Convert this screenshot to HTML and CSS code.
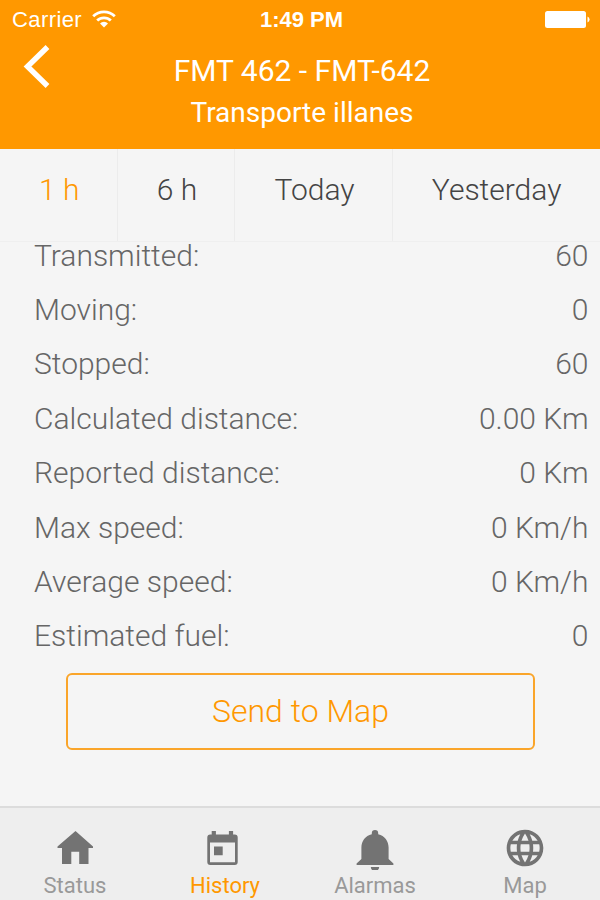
FILE: index.html
```html
<!DOCTYPE html>
<html lang="en">
<head>
    <meta charset="UTF-8">
    <meta name="viewport" content="width=device-width, initial-scale=1.0">
    <title>History</title>
    <link rel="stylesheet" href="styles.css">
</head>
<body>
    <header class="header">
        <div class="status-bar">
            <div class="carrier">
                <span class="carrier-name">Carrier</span>
                <svg class="wifi" viewBox="0 0 24 18" fill="none" stroke="#fff" stroke-width="2.8">
                    <path d="M1.2 6.200a15.400 15.400 0 0 1 21.600 0"/>
                    <path d="M5.200 10.600a9.700 9.700 0 0 1 13.600 0"/>
                    <path d="M12 17.400l-4-4a5.700 5.700 0 0 1 8 0z" fill="#fff" stroke="none"/>
                </svg>
            </div>
            <span class="time">1:49 PM</span>
            <svg class="battery" viewBox="0 0 46 18" fill="#fff">
                <rect x="0" y="0" width="41" height="17" rx="2.5"/>
                <path d="M42.500 5.500a3.200 3.200 0 0 1 0 6z"/>
            </svg>
        </div>
        <div class="title-bar">
            <a class="back" href="#" aria-label="Back">
                <svg viewBox="0 0 28 44" fill="none" stroke="#fff" stroke-width="5.4">
                    <path d="M24.500 2L4.500 21.500 24.500 41"/>
                </svg>
            </a>
            <div class="titles">
                <h1>FMT 462 - FMT-642</h1>
                <h2>Transporte illanes</h2>
            </div>
        </div>
    </header>

    <nav class="periods">
        <a class="active" href="#">1 h</a>
        <a href="#">6 h</a>
        <a href="#">Today</a>
        <a href="#">Yesterday</a>
    </nav>

    <main class="content">
        <dl class="stats">
            <div class="row"><dt>Transmitted:</dt><dd>60</dd></div>
            <div class="row"><dt>Moving:</dt><dd>0</dd></div>
            <div class="row"><dt>Stopped:</dt><dd>60</dd></div>
            <div class="row"><dt>Calculated distance:</dt><dd>0.00 Km</dd></div>
            <div class="row"><dt>Reported distance:</dt><dd>0 Km</dd></div>
            <div class="row"><dt>Max speed:</dt><dd>0 Km/h</dd></div>
            <div class="row"><dt>Average speed:</dt><dd>0 Km/h</dd></div>
            <div class="row"><dt>Estimated fuel:</dt><dd>0</dd></div>
        </dl>
        <button class="send-button">Send to Map</button>
    </main>

    <footer class="tabs">
        <a href="#">
            <svg viewBox="0 0 44 44"><path d="M22.500 5L4.500 20.500V22H9v16h9.300V25.700h7.900V38h9.300V22H40v-1.500z"/></svg>
            <span>Status</span>
        </a>
        <a class="active" href="#">
            <svg viewBox="0 0 44 44"><path fill-rule="evenodd" d="M8.700 5h4.200v3.500h13V5h4.200v3.500h1.600a3 3 0 0 1 3 3V36a3 3 0 0 1-3 3H7.300a3 3 0 0 1-3-3V11.500a3 3 0 0 1 3-3h1.400zM7 16.500v19.800h25V16.500zM11 20.500h8.700v8.700H11z"/></svg>
            <span>History</span>
        </a>
        <a href="#">
            <svg viewBox="0 0 44 44"><path d="M22 4a3.200 3.200 0 0 0-3.200 3.200v1C12.300 9.800 8.400 15 8.400 21.500V33L3.600 37.500V39h36.800v-1.500L35.600 33V21.500c0-6.500-3.900-11.700-10.400-13.300v-1A3.200 3.200 0 0 0 22 4zM17.800 41h8.400a4.200 4.200 0 0 1-8.400 0z"/></svg>
            <span>Alarmas</span>
        </a>
        <a href="#">
            <svg viewBox="0 0 24 24"><path d="M11.990 2C6.470 2 2 6.480 2 12s4.470 10 9.990 10C17.520 22 22 17.520 22 12S17.520 2 11.990 2zm6.930 6h-2.950c-.32-1.250-.78-2.450-1.380-3.560 1.840.63 3.370 1.910 4.330 3.560zM12 4.040c.83 1.200 1.480 2.530 1.910 3.960h-3.820c.43-1.430 1.080-2.760 1.910-3.960zM4.260 14C4.100 13.360 4 12.690 4 12s.1-1.360.26-2h3.380c-.08.66-.14 1.320-.14 2s.06 1.340.14 2H4.260zm.82 2h2.950c.32 1.250.78 2.450 1.380 3.560-1.840-.63-3.370-1.900-4.330-3.560zm2.950-8H5.080c.96-1.660 2.490-2.930 4.330-3.560C8.810 5.550 8.350 6.750 8.030 8zM12 19.960c-.83-1.200-1.480-2.530-1.910-3.960h3.820c-.43 1.430-1.080 2.760-1.910 3.960zM14.340 14H9.660c-.09-.66-.16-1.320-.16-2s.07-1.350.16-2h4.680c.09.65.16 1.320.16 2s-.07 1.340-.16 2zm.25 5.560c.6-1.110 1.060-2.310 1.380-3.560h2.950c-.96 1.650-2.490 2.930-4.330 3.560zM16.360 14c.08-.66.14-1.320.14-2s-.06-1.340-.14-2h3.380c.16.64.26 1.310.26 2s-.1 1.360-.26 2h-3.380z"/></svg>
            <span>Map</span>
        </a>
    </footer>
</body>
</html>
```

FILE: styles.css
```css
* {
    box-sizing: border-box;
}

body {
    display: flex;
    flex-direction: column;
    height: 900px;
    margin: 0;
    overflow: hidden;
    background-color: #f5f5f5;
    font-family: Roboto, sans-serif;
    font-weight: 300;
}

a {
    color: inherit;
    text-decoration: none;
}

.header {
    height: 149px;
    background-color: #ff9800;
    color: #fff;
}

.status-bar {
    display: grid;
    grid-template-columns: 1fr auto 1fr;
    align-items: center;
    height: 40px;
    padding: 0 9px 0 12px;
    font-family: "Liberation Sans", Arial, sans-serif;
    font-size: 22px;
}

.carrier {
    display: flex;
    align-items: center;
    gap: 10px;
    font-weight: 400;
}

.carrier-name {
    letter-spacing: 0.4px;
}

.wifi {
    width: 24px;
    height: 18px;
    margin-bottom: 2px;
}

.time {
    font-weight: 700;
}

.battery {
    justify-self: end;
    width: 46px;
    height: 18px;
}

.title-bar {
    display: grid;
    grid-template-columns: 76px 1fr 72px;
}

.back {
    padding: 5px 0 0 23px;
}

.back svg {
    display: block;
    width: 28px;
    height: 44px;
}

.titles {
    padding-top: 10px;
    text-align: center;
}

.titles h1,
.titles h2 {
    margin: 0;
    font-weight: 400;
    line-height: 42px;
}

.titles h1 {
    font-size: 30px;
}

.titles h2 {
    font-size: 28px;
}

.periods {
    display: flex;
    height: 93px;
    border-bottom: 1px solid #efefef;
    color: #444;
    font-size: 30px;
    line-height: 82px;
    white-space: nowrap;
}

.periods a {
    flex: none;
    padding: 0 37.3px 0 39px;
    border-right: 1px solid #ececec;
}

.periods a:last-child {
    border-right: none;
}

.periods .active {
    color: #ff9800;
}

.content {
    flex: 1;
}

.stats {
    margin: -13.4px 11.5px 0 34px;
    color: #666;
    font-size: 30px;
}

.row {
    display: flex;
    justify-content: space-between;
    height: 54.4px;
    line-height: 54px;
}

.row dd {
    margin: 0;
}

.send-button {
    display: block;
    width: 469px;
    height: 77px;
    margin: 9.6px 0 0 66px;
    padding: 0 0 2px;
    border: 2px solid #faa52a;
    border-radius: 6px;
    background: none;
    color: #ff9800;
    font: 300 32px Roboto, sans-serif;
}

.tabs {
    display: grid;
    grid-template-columns: repeat(4, 1fr);
    height: 94px;
    padding-top: 18px;
    border-top: 2px solid #dcdcdc;
    background-color: #eee;
    color: #999;
    font-size: 22px;
    font-weight: 400;
}

.tabs a {
    display: flex;
    flex-direction: column;
    align-items: center;
}

.tabs svg {
    width: 44px;
    height: 44px;
    fill: #737373;
}

.tabs .active {
    color: #ff9800;
}

.tabs span {
    line-height: 31px;
}
```
